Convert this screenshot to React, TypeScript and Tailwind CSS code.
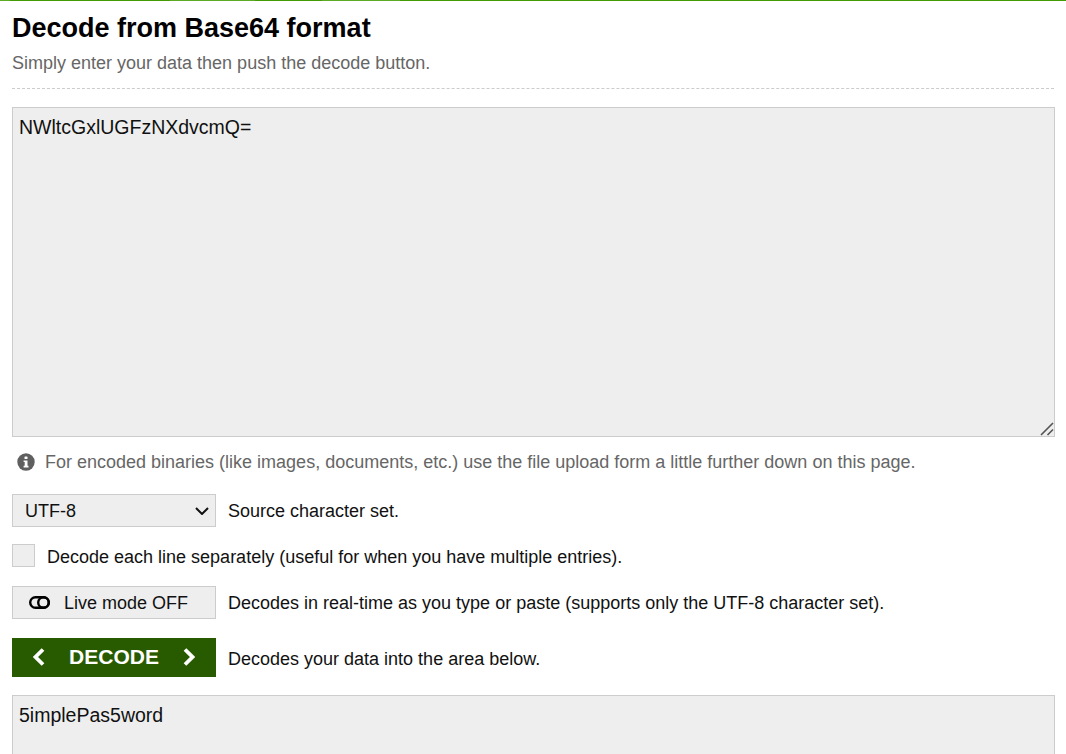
const font = "font-['Liberation_Sans',Arial,sans-serif]";

function InfoIcon() {
  return (
    <svg viewBox="0 0 18 18" className="h-[18px] w-[18px] shrink-0">
      <circle cx="9" cy="9" r="8.7" fill="#5f5f5f" />
      <rect x="7.5" y="3.4" width="3" height="2.7" rx="0.6" fill="#fff" />
      <path d="M6.6 7.4h3.9v5.3h1v1.7H6.6v-1.7h1.1V9.1H6.6z" fill="#fff" />
    </svg>
  );
}

function ToggleIcon() {
  return (
    <svg viewBox="0 0 21 13" className="h-[13px] w-[21px] shrink-0" fill="none" stroke="#000" strokeWidth="2.4">
      <rect x="1.2" y="1.2" width="18.6" height="10.6" rx="5.3" />
      <circle cx="14.5" cy="6.5" r="5.3" />
    </svg>
  );
}

function Chevron({ flip }: { flip?: boolean }) {
  return (
    <svg viewBox="0 0 12 18" className="h-[18px] w-3 shrink-0" fill="none" stroke="#fff" strokeWidth="3.8">
      <path d={flip ? 'M2 1.5 9.5 9 2 16.5' : 'M10 1.5 2.5 9 10 16.5'} />
    </svg>
  );
}

function ResizeGrip() {
  return (
    <svg viewBox="0 0 14 14" className="pointer-events-none absolute bottom-[1px] right-[1px] h-[14px] w-[14px]" fill="none" stroke="#555" strokeWidth="1.6">
      <path d="M1 13 13 1M7.5 13 13 7.5" />
    </svg>
  );
}

export default function App() {
  return (
    <div className={`${font} h-screen overflow-hidden bg-white text-[#111]`}>
      {/* top strip, a few lighter patches in it */}
      <div className="flex h-px">
        <div className="w-[10px] bg-[#5faa25]" />
        <div className="w-[160px] bg-[#409c00]" />
        <div className="w-[85px] bg-[#5faa25]" />
        <div className="w-[67px] bg-[#409c00]" />
        <div className="w-[78px] bg-[#5faa25]" />
        <div className="flex-1 bg-[#409c00]" />
      </div>

      <div className="px-3">
        <h1 className="mt-[11px] text-[27px] font-bold leading-[32px] text-black">Decode from Base64 format</h1>
        <p className="mt-[7px] text-[18px] leading-[24px] text-[#666]">Simply enter your data then push the decode button.</p>
        <div className="mt-[13px] border-t border-dashed border-[#ccc]" />

        <div className="relative mt-[18px] h-[330px] w-[1043px]">
          <textarea
            defaultValue="NWltcGxlUGFzNXdvcmQ="
            className="block h-full w-full resize-none border border-[#ccc] bg-[#eee] px-[6px] py-[5px] text-[19.5px] leading-[28px] text-[#111] outline-none"
          />
          <ResizeGrip />
        </div>

        <div className="mt-[13px] flex h-[24px] items-center pl-[5px] text-[18px] text-[#666]">
          <InfoIcon />
          <span className="ml-[10px]">For encoded binaries (like images, documents, etc.) use the file upload form a little further down on this page.</span>
        </div>

        <div className="mt-[20px] flex items-center">
          <div className="relative h-[33px] w-[204px]">
            <select className="h-full w-full appearance-none border border-[#ccc] bg-[#eee] pl-3 pt-[2px] text-[18px] text-[#111] outline-none">
              <option>UTF-8</option>
            </select>
            <svg viewBox="0 0 14 8" className="pointer-events-none absolute left-[183px] top-[13px] h-2 w-[14px]" fill="none" stroke="#111" strokeWidth="2">
              <path d="M1 1l6 6 6-6" />
            </svg>
          </div>
          <span className="ml-3 pt-px text-[18px]">Source character set.</span>
        </div>

        <label className="mt-[17px] flex items-start">
          <span className="h-[23px] w-[23px] shrink-0 border border-[#ccc] bg-[#eee]" />
          <span className="ml-3 text-[18px]">Decode each line separately (useful for when you have multiple entries).</span>
        </label>

        <div className="mt-[15px] flex items-center">
          <button className="flex h-[33px] w-[204px] items-center border border-[#ccc] bg-[#eee] pl-4 text-[18px] text-[#111]">
            <ToggleIcon />
            <span className="ml-[14px] pt-px">Live mode OFF</span>
          </button>
          <span className="ml-3 pt-px text-[18px]">Decodes in real-time as you type or paste (supports only the UTF-8 character set).</span>
        </div>

        <div className="mt-[19px] flex items-center">
          <button className="flex h-[39px] w-[204px] items-center justify-center bg-[#285b00] pb-[2px] text-[21px] font-bold text-white">
            <Chevron />
            <span className="mx-[24px]">DECODE</span>
            <Chevron flip />
          </button>
          <span className="ml-3 pt-[3px] text-[18px]">Decodes your data into the area below.</span>
        </div>

        <textarea
          defaultValue="5implePas5word"
          className="mt-[18px] block h-[330px] w-[1043px] resize-none border border-[#ccc] bg-[#eee] px-[6px] py-[5px] text-[19.5px] leading-[28px] text-[#111] outline-none"
        />
      </div>
    </div>
  );
}
